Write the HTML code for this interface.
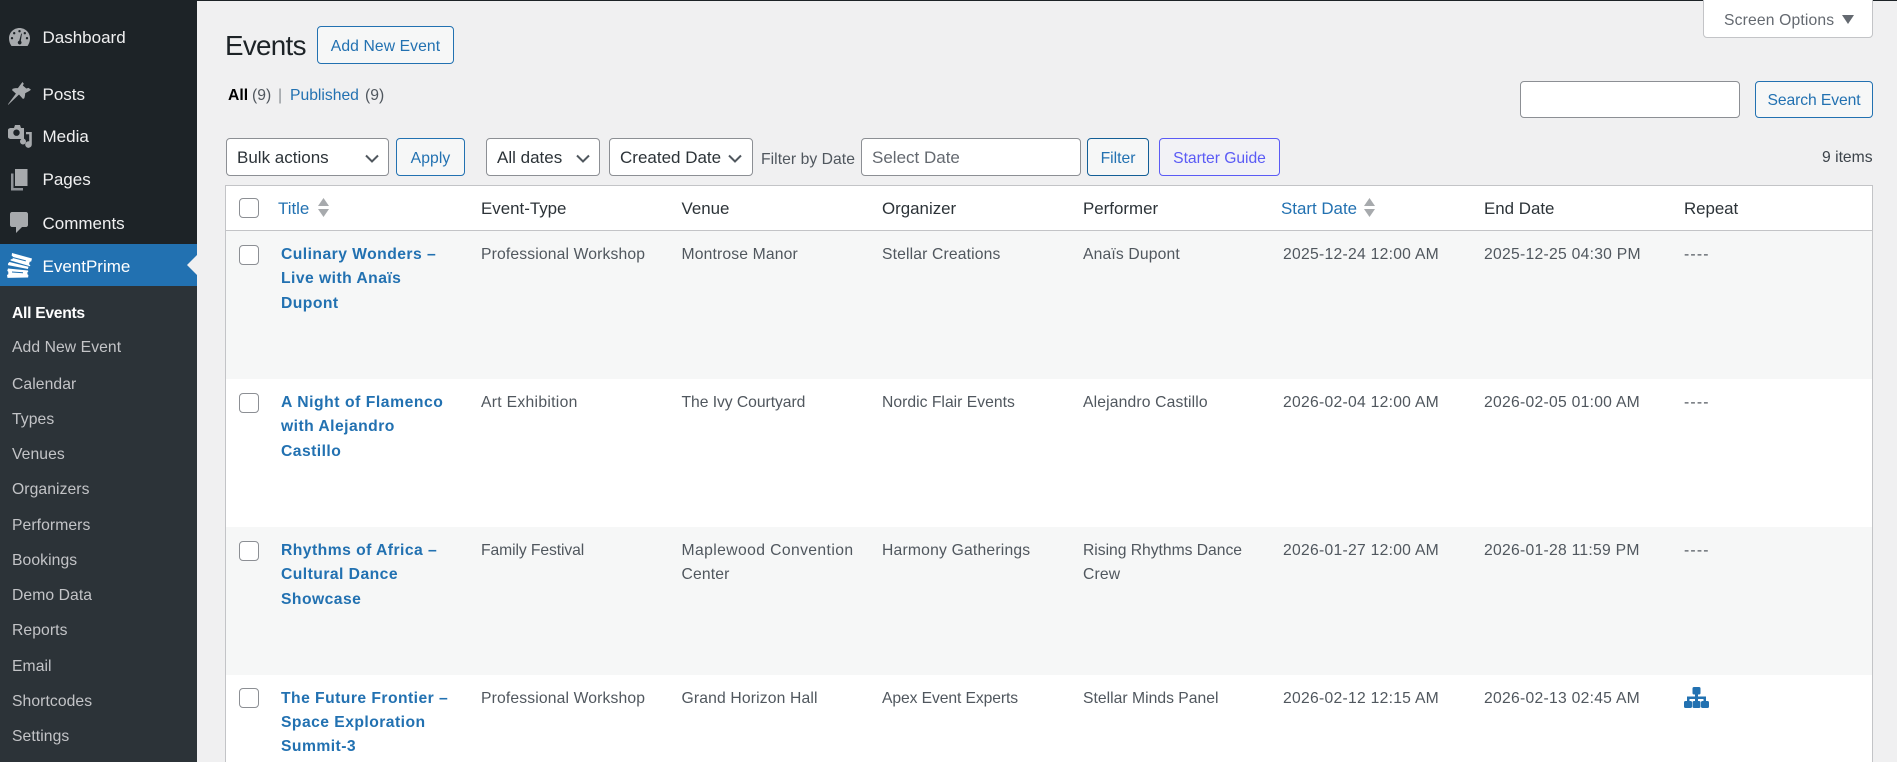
<!DOCTYPE html>
<html lang="en"><head><meta charset="utf-8"><title>Events</title>
<style>
html,body{margin:0;padding:0;width:1897px;height:762px;overflow:hidden}
body{position:relative;background:#f0f0f1;font-family:"Liberation Sans",Arial,sans-serif;color:#3c434a}
.a{position:absolute;white-space:nowrap}
.box{position:absolute;box-sizing:border-box}
.t{position:absolute;white-space:nowrap;line-height:24px;font-size:15.7px;margin-top:1px}
.m{position:absolute;white-space:nowrap;line-height:24px;font-size:17px;left:42.5px;color:#f0f0f1;margin-top:1px}
.s{position:absolute;white-space:nowrap;line-height:24px;font-size:15.7px;left:12px;color:#c3c4c7;margin-top:1px;letter-spacing:.08px}
.h{position:absolute;white-space:nowrap;line-height:24px;font-size:16.9px;color:#2c3338;top:197px}
.c{position:absolute;white-space:nowrap;line-height:24px;font-size:15.7px;color:#50575e;letter-spacing:.15px;margin-top:1px}
.d{letter-spacing:.27px}
.r{letter-spacing:1.2px}
.e{position:absolute;white-space:nowrap;line-height:24px;font-size:15.7px;font-weight:bold;color:#2271b1;left:281px;letter-spacing:.45px;margin-top:1px}
.btn{position:absolute;box-sizing:border-box;height:38px;top:138px;border:1px solid #2271b1;border-radius:4px;background:#f6f7f7;color:#2271b1;font-size:15.7px;line-height:39px;text-align:center;white-space:nowrap}
.sel{position:absolute;box-sizing:border-box;height:38px;top:138px;border:1px solid #8c8f94;border-radius:4px;background:#fff;color:#2c3338;font-size:17px;line-height:38px;padding-left:10px;white-space:nowrap}
.cb{position:absolute;box-sizing:border-box;left:239px;width:20px;height:20px;border:1px solid #8c8f94;border-radius:4px;background:#fff}
svg{position:absolute;display:block}
</style></head><body>

<!-- top strip -->
<div class="box" style="left:0;top:0;width:1897px;height:1px;background:#1d2327"></div>

<!-- sidebar -->
<div class="box" style="left:0;top:0;width:197px;height:762px;background:#1d2327"></div>
<div class="box" style="left:0;top:286px;width:197px;height:476px;background:#2c3338"></div>
<div class="box" style="left:0;top:244px;width:197px;height:42px;background:#2271b1"></div>
<svg style="left:187px;top:255px" width="10" height="20" viewBox="0 0 10 20"><path d="M10 0L0 10l10 10z" fill="#f0f0f1"/></svg>

<!-- dashboard icon -->
<svg style="left:9px;top:28px" width="21" height="18" viewBox="0 0 21 18"><path fill-rule="evenodd" fill="#a7aaad" d="M10.5 0C4.7 0 0 4.6 0 10.4c0 2.6.8 5 2 6.9l.5.7h16l.5-.7c1.200-1.900 2-4.300 2-6.900C21 4.600 16.300 0 10.500 0zM10.500 2a1.200 1.200 0 110 2.400 1.200 1.200 0 010-2.400zM5.200 4a1.200 1.200 0 110 2.400 1.200 1.200 0 010-2.400zM15.800 4a1.200 1.200 0 110 2.400 1.200 1.200 0 010-2.400zM3 9a1.200 1.200 0 110 2.400A1.200 1.200 0 013 9zM18 9a1.200 1.200 0 110 2.400A1.200 1.200 0 0118 9zM12.200 5.500l.7.3-1.100 7.200c.6.500.9 1.200.7 2-.2 1.100-1.200 1.700-2.200 1.500-1-.2-1.700-1.200-1.500-2.200.2-.8.700-1.300 1.400-1.500z"/></svg>
<!-- pin icon -->
<svg style="left:8px;top:82px" width="23" height="23" viewBox="0 0 23 23"><path fill="#a7aaad" d="M14.500 0l1.300 1.800-1 1.700 3.500 3 2.200-.6L23 7.800c-1.900 1.300-3.700 2.400-5.800 3.400-.1 1.600-.3 3.300-.9 5l-1.300.8-4-4.500L0 23l.2-1 7.700-10.400-3.900-3.500.7-1.400c1.700-.6 3.400-.7 5.200-.6 1.600-2.100 3-4.200 4.600-6.100z"/></svg>
<!-- media icon -->
<svg style="left:8px;top:125px" width="24" height="23" viewBox="0 0 24 23"><path fill-rule="evenodd" fill="#a7aaad" d="M3 3h3l1-3h5l1 3h3v11H3c-1.500 0-3-.8-3-2V5c0-1.200 1.500-2 3-2zM8.500 4.500a3.200 3.200 0 100 6.400 3.200 3.200 0 000-6.400z"/><path fill="#a7aaad" d="M18 7h5.800v12.500a3.300 3.300 0 11-2.600-3.200V9.200H18zM12 16.500a3 3 0 113 3 3 3 0 01-3-3z"/></svg>
<!-- pages icon -->
<svg style="left:10px;top:169px" width="18" height="22" viewBox="0 0 18 22"><path fill="#a7aaad" d="M5 0h12.500v17H5z"/><path fill="#8f9398" d="M1 4.500h2.500V19H13v2.500H1z"/></svg>
<!-- comments icon -->
<svg style="left:10px;top:212px" width="18" height="21" viewBox="0 0 18 21"><path fill="#a7aaad" d="M2 0h14c1.100 0 2 .9 2 2v11c0 1.100-.9 2-2 2h-4l-6 6v-6H2c-1.100 0-2-.9-2-2V2C0 .9.900 0 2 0z"/></svg>
<!-- eventprime tickets -->
<svg style="left:7px;top:253px" width="26" height="25" viewBox="0 0 26 25"><path fill="#fff" d="M5 0l20 5.500-.8 3-1.500.2-.7 2.500 1.300.9-.3 1.100L3.500 7.500l.3-1.200 1.700-.2.600-2.300-1.400-1z"/><path fill="#fff" d="M2.500 9l18 4.500 1 .3-.6 2.200-18-3.500-2-.4.400-2z" /><path fill="#fff" d="M1 15.500l20 2 .3 1-.9.900v1.800l1 .8-.3 2.500-20.600.4-.5-2.900 1.300-.8v-2.400l-1-.9z"/><path fill="#2271b1" d="M6 4l13 3.400-.3 1L5.700 5zM5 18.500l11 .8v1L5 19.500z"/></svg>

<div class="m" style="top:25px">Dashboard</div>
<div class="m" style="top:82px">Posts</div>
<div class="m" style="top:124px">Media</div>
<div class="m" style="top:167px">Pages</div>
<div class="m" style="top:211px">Comments</div>
<div class="m" style="top:254px;color:#fff">EventPrime</div>

<div class="s" style="top:301px;color:#fff;font-weight:bold;letter-spacing:-.3px">All Events</div>
<div class="s" style="top:335px">Add New Event</div>
<div class="s" style="top:372px">Calendar</div>
<div class="s" style="top:407px">Types</div>
<div class="s" style="top:442px">Venues</div>
<div class="s" style="top:477px">Organizers</div>
<div class="s" style="top:513px">Performers</div>
<div class="s" style="top:548px">Bookings</div>
<div class="s" style="top:583px">Demo Data</div>
<div class="s" style="top:618px">Reports</div>
<div class="s" style="top:654px">Email</div>
<div class="s" style="top:689px">Shortcodes</div>
<div class="s" style="top:724px">Settings</div>

<!-- screen options -->
<div class="box" style="left:1703px;top:-1px;width:170px;height:39px;background:#fff;border:1px solid #c3c4c7;border-radius:0 0 4px 4px"></div>
<div class="t" style="left:1724px;top:8px;color:#646970;letter-spacing:.15px">Screen Options</div>
<svg style="left:1842px;top:15px" width="12" height="9" viewBox="0 0 12 9"><path d="M0 0h12L6 9z" fill="#646970"/></svg>

<!-- heading -->
<div class="a" style="left:225px;top:28px;font-size:27.8px;line-height:36px;color:#1d2327;letter-spacing:-.7px">Events</div>
<div class="btn" style="left:317px;top:26px;width:137px;letter-spacing:.1px">Add New Event</div>

<!-- subsubsub -->
<div class="t" style="left:228px;top:83px;color:#000;font-weight:bold">All</div>
<div class="t" style="left:252px;top:83px;color:#50575e">(9)</div>
<div class="t" style="left:278px;top:83px;color:#8a8f94">|</div>
<div class="t" style="left:290px;top:83px;color:#2271b1">Published</div>
<div class="t" style="left:365px;top:83px;color:#50575e">(9)</div>

<!-- search -->
<div class="box" style="left:1520px;top:81px;width:220px;height:37px;background:#fff;border:1px solid #8c8f94;border-radius:4px"></div>
<div class="btn" style="left:1755px;top:81px;width:118px;height:37px;line-height:38px;letter-spacing:-.1px">Search Event</div>

<!-- filters -->
<div class="sel" style="left:226px;width:163px">Bulk actions</div>
<svg style="left:365px;top:154px" width="14" height="9" viewBox="0 0 14 9"><path d="M1 1.500l6 6 6-6" fill="none" stroke="#50575e" stroke-width="2"/></svg>
<div class="btn" style="left:396px;width:69px;letter-spacing:.1px">Apply</div>
<div class="sel" style="left:486px;width:114px">All dates</div>
<svg style="left:576px;top:154px" width="14" height="9" viewBox="0 0 14 9"><path d="M1 1.500l6 6 6-6" fill="none" stroke="#50575e" stroke-width="2"/></svg>
<div class="sel" style="left:609px;width:144px">Created Date</div>
<svg style="left:728px;top:154px" width="14" height="9" viewBox="0 0 14 9"><path d="M1 1.500l6 6 6-6" fill="none" stroke="#50575e" stroke-width="2"/></svg>
<div class="t" style="left:761px;top:147px;font-size:15.7px;color:#50575e;letter-spacing:.05px">Filter by Date</div>
<div class="sel" style="left:861px;width:220px;color:#646970">Select Date</div>
<div class="btn" style="left:1087px;width:62px;border-color:#135e96">Filter</div>
<div class="btn" style="left:1159px;width:121px;border-color:#5b5bf5;color:#5b5bf5;background:#f2f2f6;letter-spacing:-.05px">Starter Guide</div>
<div class="t" style="left:1822px;top:145px;color:#3c434a">9 items</div>

<!-- table -->
<div class="box" style="left:225px;top:185px;width:1648px;height:577px;background:#fff;border:1px solid #c3c4c7;border-bottom:0"></div>
<div class="box" style="left:226px;top:230px;width:1646px;height:1px;background:#c3c4c7"></div>
<div class="box" style="left:226px;top:231px;width:1646px;height:148px;background:#f6f7f7"></div>
<div class="box" style="left:226px;top:527px;width:1646px;height:148px;background:#f6f7f7"></div>

<div class="cb" style="top:198px"></div>
<div class="h" style="left:278px;color:#2271b1">Title</div>
<svg style="left:318px;top:198px" width="11" height="19" viewBox="0 0 11 19"><path d="M5.500 0L11 8H0zM0 11h11l-5.500 8z" fill="#a7aaad"/></svg>
<div class="h" style="left:481px">Event-Type</div>
<div class="h" style="left:681.5px">Venue</div>
<div class="h" style="left:882px">Organizer</div>
<div class="h" style="left:1083px">Performer</div>
<div class="h" style="left:1281px;color:#2271b1">Start Date</div>
<svg style="left:1364px;top:198px" width="11" height="19" viewBox="0 0 11 19"><path d="M5.500 0L11 8H0zM0 11h11l-5.500 8z" fill="#a7aaad"/></svg>
<div class="h" style="left:1484px">End Date</div>
<div class="h" style="left:1684px;letter-spacing:-.05px">Repeat</div>

<!-- row 1 -->
<div class="cb" style="top:245px"></div>
<div class="e" style="top:242px">Culinary Wonders –</div>
<div class="e" style="top:266px">Live with Anaïs</div>
<div class="e" style="top:291px">Dupont</div>
<div class="c" style="left:481px;top:242px">Professional Workshop</div>
<div class="c" style="left:681.5px;top:242px">Montrose Manor</div>
<div class="c" style="left:882px;top:242px">Stellar Creations</div>
<div class="c" style="left:1083px;top:242px">Anaïs Dupont</div>
<div class="c d" style="left:1283px;top:242px">2025-12-24 12:00 AM</div>
<div class="c d" style="left:1484px;top:242px">2025-12-25 04:30 PM</div>
<div class="c r" style="left:1684px;top:242px">----</div>

<!-- row 2 -->
<div class="cb" style="top:393px"></div>
<div class="e" style="top:390px;letter-spacing:.55px">A Night of Flamenco</div>
<div class="e" style="top:414px">with Alejandro</div>
<div class="e" style="top:439px">Castillo</div>
<div class="c" style="left:481px;top:390px;letter-spacing:.3px">Art Exhibition</div>
<div class="c" style="left:681.5px;top:390px;letter-spacing:-.05px">The Ivy Courtyard</div>
<div class="c" style="left:882px;top:390px;letter-spacing:.02px">Nordic Flair Events</div>
<div class="c" style="left:1083px;top:390px">Alejandro Castillo</div>
<div class="c d" style="left:1283px;top:390px">2026-02-04 12:00 AM</div>
<div class="c d" style="left:1484px;top:390px">2026-02-05 01:00 AM</div>
<div class="c r" style="left:1684px;top:390px">----</div>

<!-- row 3 -->
<div class="cb" style="top:541px"></div>
<div class="e" style="top:538px">Rhythms of Africa –</div>
<div class="e" style="top:562px">Cultural Dance</div>
<div class="e" style="top:587px">Showcase</div>
<div class="c" style="left:481px;top:538px;letter-spacing:-.1px">Family Festival</div>
<div class="c" style="left:681.5px;top:538px;letter-spacing:.4px">Maplewood Convention</div>
<div class="c" style="left:681.5px;top:562px">Center</div>
<div class="c" style="left:882px;top:538px;letter-spacing:.2px">Harmony Gatherings</div>
<div class="c" style="left:1083px;top:538px;letter-spacing:-.03px">Rising Rhythms Dance</div>
<div class="c" style="left:1083px;top:562px">Crew</div>
<div class="c d" style="left:1283px;top:538px">2026-01-27 12:00 AM</div>
<div class="c d" style="left:1484px;top:538px">2026-01-28 11:59 PM</div>
<div class="c r" style="left:1684px;top:538px">----</div>

<!-- row 4 -->
<div class="cb" style="top:688px"></div>
<div class="e" style="top:686px">The Future Frontier –</div>
<div class="e" style="top:710px">Space Exploration</div>
<div class="e" style="top:734px">Summit-3</div>
<div class="c" style="left:481px;top:686px">Professional Workshop</div>
<div class="c" style="left:681.5px;top:686px">Grand Horizon Hall</div>
<div class="c" style="left:882px;top:686px;letter-spacing:-.1px">Apex Event Experts</div>
<div class="c" style="left:1083px;top:686px;letter-spacing:.02px">Stellar Minds Panel</div>
<div class="c d" style="left:1283px;top:686px">2026-02-12 12:15 AM</div>
<div class="c d" style="left:1484px;top:686px">2026-02-13 02:45 AM</div>
<svg style="left:1684px;top:687px" width="25" height="21" viewBox="0 0 25 21"><g fill="#2271b1"><rect x="8.500" y="0" width="8" height="7.500" rx="1.500"/><rect x="0" y="14" width="8" height="7" rx="1.500"/><rect x="8.500" y="14" width="8" height="7" rx="1.500"/><rect x="17" y="14" width="8" height="7" rx="1.500"/><path d="M11 7h3v2.500h8v4.500h-2.500v-2h-5.500v2h-3v-2H5.500v2H3V9.500h8z"/></g></svg>

</body></html>
